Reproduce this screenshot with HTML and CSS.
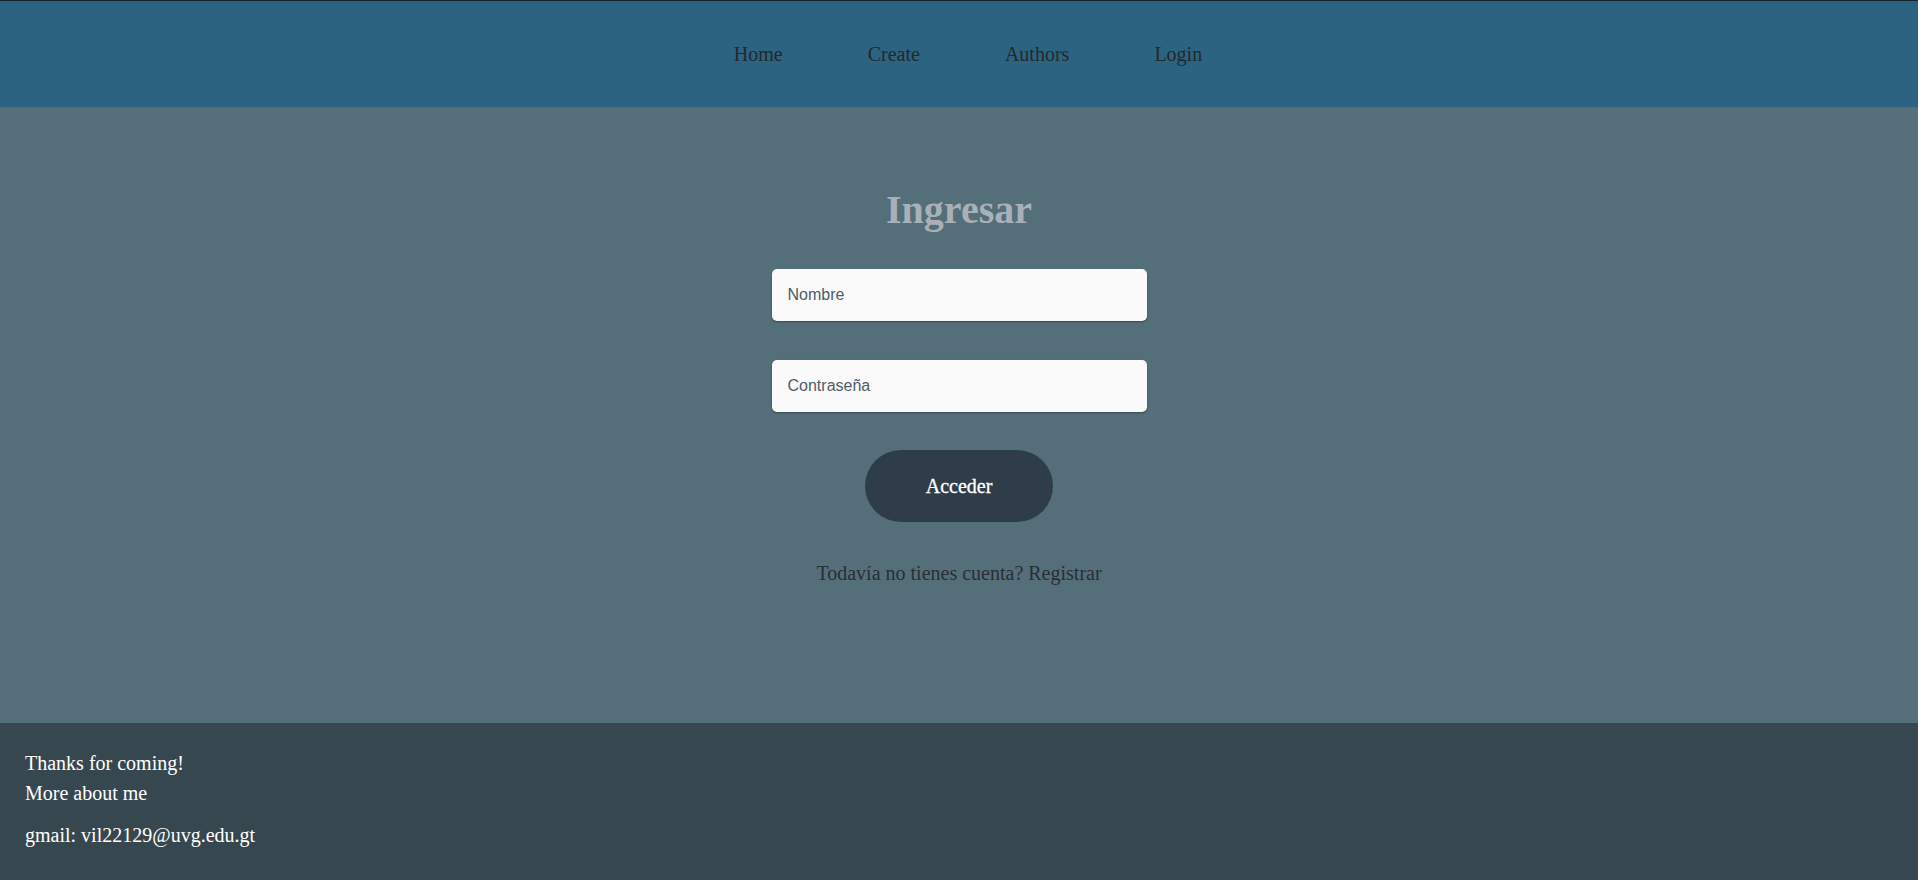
FILE: index.html
```html
<!DOCTYPE html>
<html lang="es">
<head>
<meta charset="utf-8">
<title>Ingresar</title>
<link rel="stylesheet" href="styles.css">
</head>
<body>
<header class="topbar">
  <nav class="nav">
    <a class="nav-link" href="#">Home</a>
    <a class="nav-link" href="#">Create</a>
    <a class="nav-link" href="#">Authors</a>
    <a class="nav-link" href="#">Login</a>
  </nav>
</header>
<main class="main">
  <h1 class="title">Ingresar</h1>
  <form class="form">
    <input class="field" type="text" placeholder="Nombre">
    <input class="field" type="password" placeholder="Contraseña">
    <button class="btn" type="button">Acceder</button>
  </form>
  <p class="register">Todavía no tienes cuenta? Registrar</p>
</main>
<footer class="footer">
  <p class="foot-line">Thanks for coming!</p>
  <p class="foot-line">More about me</p>
  <p class="foot-line foot-mail">gmail: vil22129@uvg.edu.gt</p>
</footer>
</body>
</html>
```
FILE: styles.css
```css
html, body {
  margin: 0;
  padding: 0;
}
body {
  font-family: "Liberation Serif", "Times New Roman", serif;
  font-size: 20px;
  line-height: 23px;
  display: flex;
  flex-direction: column;
  min-height: 880px;
  background: #546e7a;
}
.topbar {
  height: 106px;
  background: #2b6380;
  border-top: 1px solid #15222c;
  display: flex;
  align-items: center;
  justify-content: center;
}
.nav {
  display: flex;
  gap: 85px;
  padding-left: 18px;
}
.nav-link {
  color: #24282d;
  text-decoration: none;
}
.main {
  flex: 1;
  display: flex;
  flex-direction: column;
  align-items: center;
  background: #546e7a;
}
.title {
  margin: 80px 0 0;
  font-size: 40px;
  line-height: 46px;
  font-weight: bold;
  color: #a9b0b8;
}
.form {
  display: flex;
  flex-direction: column;
  align-items: center;
  margin-top: 36px;
}
.field {
  box-sizing: border-box;
  width: 375px;
  height: 52px;
  margin: 0 0 39px;
  padding: 0 16px;
  border: none;
  border-radius: 5px;
  background: #fafafa;
  box-shadow: 0 1px 2px rgba(0, 0, 0, 0.35);
  font-family: "Liberation Sans", Arial, sans-serif;
  font-size: 16px;
  color: #333;
  outline: none;
}
.field:last-of-type {
  margin-bottom: 38px;
}
.field::placeholder {
  color: #4d5d68;
  opacity: 1;
}
.btn {
  width: 188px;
  height: 72px;
  border: none;
  border-radius: 36px;
  background: #2f3d4b;
  color: #ffffff;
  font-family: "Liberation Serif", "Times New Roman", serif;
  font-size: 20px;
  font-weight: normal;
  -webkit-text-stroke: 0.3px #ffffff;
  cursor: pointer;
  padding: 0;
}
.register {
  margin: 40px 0 0;
  color: #2a2f34;
}
.footer {
  height: 157px;
  box-sizing: border-box;
  background: #37474f;
  color: #ffffff;
  padding: 29px 25px 0;
}
.foot-line {
  margin: 0 0 7px;
}
.foot-mail {
  margin-top: 19px;
}
```
